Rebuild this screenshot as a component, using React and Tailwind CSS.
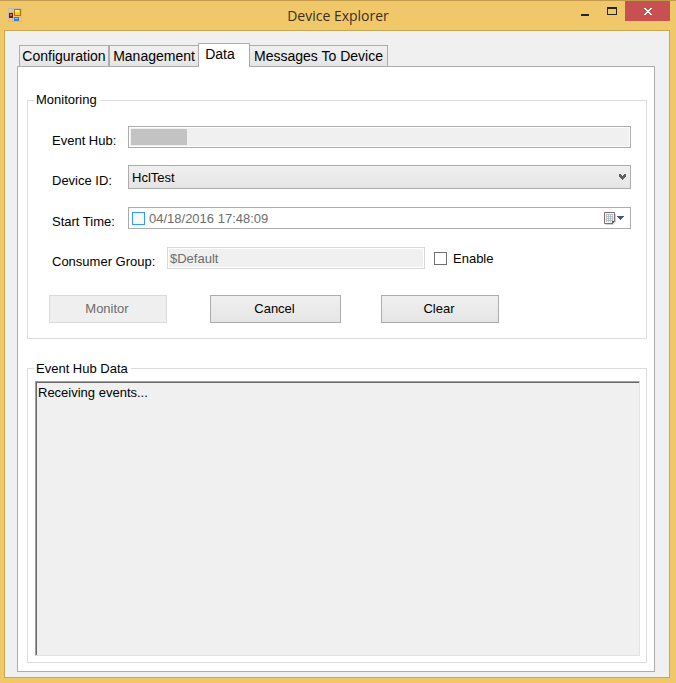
import React from "react";

function AppIcon() {
  return (
    <svg width="15" height="15" viewBox="0 0 15 15" shapeRendering="crispEdges" aria-hidden="true">
      <path d="M0.5 0V14M4.5 0V14M13.5 0V14M0 0.5H14M0 4.5H14M0 9.5H14M0 13.5H14" stroke="#c4bda8" fill="none" />
      <rect x="1" y="5" width="4" height="5" fill="#8e1016" />
      <rect x="2" y="6" width="2" height="2" fill="#e0625e" />
      <rect x="6" y="1" width="7" height="7" fill="#a87908" />
      <rect x="7" y="2" width="5" height="5" fill="#f7c93a" />
      <rect x="7" y="2" width="4" height="2" fill="#fde98c" />
      <rect x="6" y="9" width="5" height="4" fill="#3d78d8" />
      <rect x="7" y="10" width="3" height="1" fill="#8fc0fa" />
    </svg>
  );
}

function CalendarIcon() {
  return (
    <svg width="20" height="13" viewBox="0 0 20 13" aria-hidden="true">
      <path d="M1.5 12.5H9L11.5 10V2" stroke="#d5d2d0" fill="none" />
      <path d="M0.5 0.5H10.5V9L8.5 11.5H0.5Z" fill="#f5f5f7" stroke="#7b6c69" />
      <rect x="2" y="2" width="7" height="8" fill="#b3bfcd" />
      <path d="M3.5 3V10M5.5 3V10M7.5 3V10" stroke="#ffffff" strokeDasharray="1 1" />
      <path d="M8 9H11L8 12Z" fill="#5d5352" />
      <path d="M13 4H20V5H19V6H18V7H17V8H16V7H15V6H14V5H13Z" fill="#41578c" shapeRendering="crispEdges" />
    </svg>
  );
}

function TitleBar() {
  return (
    <header className="grid h-[29px] grid-cols-[1fr_auto_1fr] items-start">
      <div className="pt-[7px] pl-2">
        <AppIcon />
      </div>
      <h1 className="font-['Open_Sans',sans-serif] text-[14px] leading-[29px] text-[#3a3020]">Device Explorer</h1>
      <div className="flex justify-end pr-1.5">
        <button type="button" aria-label="Minimize" className="flex h-5 w-[26px] items-end justify-center pb-[5px]">
          <span className="h-0.5 w-2 bg-[#262626]" />
        </button>
        <button type="button" aria-label="Maximize" className="flex h-5 w-[27px] items-end justify-center pb-[6px]">
          <span className="h-2 w-2.5 border border-t-2 border-[#262626]" />
        </button>
        <button type="button" aria-label="Close" className="flex h-5 w-[45px] items-center justify-center bg-[#c75050]">
          <svg width="8" height="7" viewBox="0 0 8 7" shapeRendering="crispEdges" aria-hidden="true">
            <path
              d="M0 0H2V1H3V2H5V1H6V0H8V1H7V2H6V3H5V4H6V5H7V6H8V7H6V6H5V5H3V6H2V7H0V6H1V5H2V4H3V3H2V2H1V1H0Z"
              fill="#ffffff"
            />
          </svg>
        </button>
      </div>
    </header>
  );
}

function Tab({ selected, className, children }) {
  return (
    <button
      type="button"
      role="tab"
      aria-selected={selected}
      className={
        (selected
          ? "z-10 -mx-px -mb-px h-6 bg-white pb-1 "
          : "h-[21px] bg-linear-to-b from-[#f0f0f0] to-[#e5e5e5] ") +
        "border border-b-0 border-[#acacac] text-center text-[14px] leading-4 whitespace-nowrap " +
        className
      }
    >
      {children}
    </button>
  );
}

function FieldLabel({ htmlFor, className, children }) {
  return (
    <label htmlFor={htmlFor} className={"-mb-px shrink-0 pt-[7px] " + className}>
      {children}
    </label>
  );
}

function PushButton({ disabled, className, children }) {
  return (
    <button
      type="button"
      disabled={disabled}
      className={
        "h-7 border pr-0.5 text-center " +
        (disabled
          ? "border-[#d9d9d9] bg-[#efefef] text-[#6d6d6d] "
          : "border-[#acacac] bg-linear-to-b from-[#f0f0f0] to-[#e5e5e5] ") +
        className
      }
    >
      {children}
    </button>
  );
}

export default function App() {
  return (
    <div className="flex min-h-screen flex-col border-t border-[#c19b4a] bg-[#f0c869] font-['Liberation_Sans',Arial,sans-serif] text-[13px] leading-4 text-black">
      <TitleBar />
      <main className="mr-1.5 mb-[5px] ml-1 flex grow flex-col border border-[#cba650] bg-[#f0f0f0] pt-3 pr-3.5 pb-[5px] pl-3">
        <div role="tablist" className="flex items-end pl-0.5">
          <Tab className="w-[90px]">Configuration</Tab>
          <Tab className="w-[90px]">Management</Tab>
          <Tab selected className="w-[52px] pr-2">Data</Tab>
          <Tab className="w-[139px]">Messages To Device</Tab>
        </div>
        <section className="flex grow flex-col border border-[#acacac] bg-white pt-[25px] pr-[7px] pb-2 pl-[9px]">
          <fieldset className="border border-[#dcdcdc] pr-[15px] pb-[15px]">
            <legend className="ml-1.5 px-0.5 pr-[3px]">Monitoring</legend>
            <div className="flex items-center pt-[18px] pl-6">
              <FieldLabel htmlFor="hub" className="w-[76px]">Event Hub:</FieldLabel>
              <div className="flex h-[22px] grow border border-[#ababb0] bg-[#f0f0f0] p-px shadow-[inset_0_0_0_1px_#fff]">
                <span className="my-px ml-px w-14 bg-[#c3c3c3]" />
                <input id="hub" readOnly className="min-w-0 grow bg-transparent outline-none" />
              </div>
            </div>
            <div className="flex items-center pt-[17px] pl-6">
              <FieldLabel htmlFor="device" className="w-[76px]">Device ID:</FieldLabel>
              <div className="grid grow items-center">
                <select
                  id="device"
                  defaultValue="HclTest"
                  className="col-start-1 row-start-1 h-6 w-full appearance-none border border-[#acacac] bg-linear-to-b from-[#f0f0f0] to-[#e5e5e5] pt-0.5 pl-[3px] outline-none"
                >
                  <option>HclTest</option>
                </select>
                <svg
                  width="7"
                  height="6"
                  viewBox="0 0 7 6"
                  shapeRendering="crispEdges"
                  aria-hidden="true"
                  className="pointer-events-none col-start-1 row-start-1 mr-[5px] justify-self-end"
                >
                  <path d="M0 0H2V1H3V2H4V1H5V0H7V3H6V4H5V5H4V6H3V5H2V4H1V3H0Z" fill="#606060" />
                </svg>
              </div>
            </div>
            <div className="flex items-center pt-[18px] pl-6">
              <FieldLabel htmlFor="start" className="w-[76px]">Start Time:</FieldLabel>
              <div className="flex h-[22px] grow items-center border border-[#ababb0] bg-white pr-1.5 pl-[3px]">
                <input
                  type="checkbox"
                  aria-label="Use start time"
                  className="size-[13px] shrink-0 appearance-none border border-[#3399ff] bg-[#f3f9ff]"
                />
                <input
                  id="start"
                  defaultValue="04/18/2016 17:48:09"
                  className="ml-1 min-w-0 grow bg-transparent pt-0.5 text-[#6d6d6d] outline-none"
                />
                <button type="button" aria-label="Open calendar">
                  <CalendarIcon />
                </button>
              </div>
            </div>
            <div className="flex items-center pt-[18px] pl-6">
              <FieldLabel htmlFor="group" className="w-[115px]">Consumer Group:</FieldLabel>
              <input
                id="group"
                disabled
                defaultValue="$Default"
                className="h-[22px] w-[258px] border border-[#d9d9d9] bg-[#f0f0f0] px-0.5 text-[#6d6d6d] shadow-[inset_0_0_0_1px_#fff]"
              />
              <input
                id="enable"
                type="checkbox"
                className="ml-[9px] size-[13px] shrink-0 appearance-none border border-[#707070] bg-white"
              />
              <label htmlFor="enable" className="pt-0.5 pl-1.5">Enable</label>
            </div>
            <div className="flex pt-[26px] pl-[21px]">
              <PushButton disabled className="w-[118px]">Monitor</PushButton>
              <PushButton className="ml-[43px] w-[131px]">Cancel</PushButton>
              <PushButton className="ml-10 w-[118px]">Clear</PushButton>
            </div>
          </fieldset>
          <div className="mt-[29px] flex grow flex-col border border-[#dcdcdc] pr-1.5 pb-1.5 pl-[7px]">
            <label htmlFor="events" className="-mt-2 mb-1 -ml-px self-start bg-white px-0.5 pr-[3px]">
              Event Hub Data
            </label>
            <textarea
              id="events"
              readOnly
              defaultValue="Receiving events..."
              className="grow resize-none border border-t-[#a0a0a0] border-r-[#e3e3e3] border-b-[#e3e3e3] border-l-[#a0a0a0] bg-[#f0f0f0] px-0.5 pt-[3px] shadow-[inset_1px_1px_0_#696969] outline-none"
            />
          </div>
        </section>
      </main>
    </div>
  );
}
